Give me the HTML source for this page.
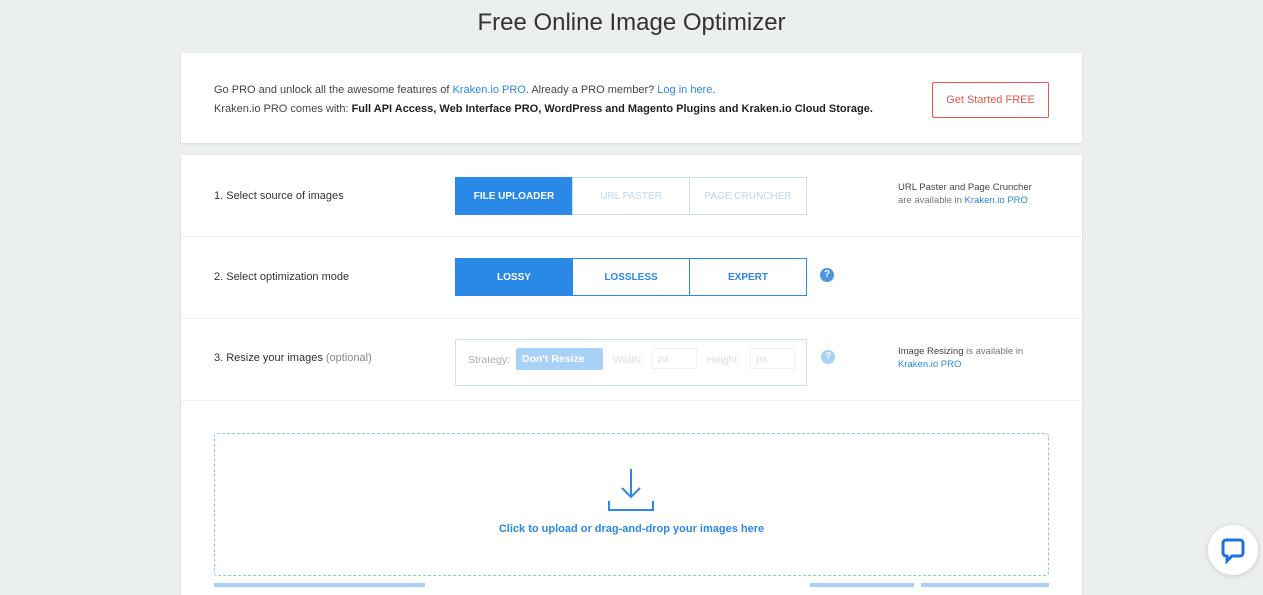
<!DOCTYPE html>
<html><head><meta charset="utf-8"><style>
*{box-sizing:border-box;margin:0;padding:0}
body{width:1263px;height:585px;overflow:hidden;background:#ecefef;font-family:"Liberation Sans",sans-serif;color:#333;position:relative}
h1{position:absolute;top:9px;left:0;width:1263px;text-align:center;font-weight:normal;font-size:24px;color:#333}
.card{position:absolute;left:181px;width:901px;background:#fff;box-shadow:0 1px 2px rgba(0,0,0,.12)}
.b{color:#2a88e6}
.row{position:absolute;left:0;width:901px;height:82px;border-bottom:1px solid #eee}
.lbl{position:absolute;left:33px;font-size:11px;color:#333}
.seg{position:absolute;left:275px;top:22px;display:flex}
.seg div{width:118px;height:38px;border:1px solid #2a88e6;margin-left:-1px;display:flex;align-items:center;justify-content:center;font-size:10px;color:#2a88e6;font-weight:bold}
.seg div.on{background:#2a88e6;color:#fff}
.seg.dis div{border-color:#c6e0f8;color:#b9d7f3;font-weight:normal}
.seg.dis div.on{border-color:#2a88e6;color:#fff;font-weight:bold}
.q{position:absolute;width:14px;height:14px;border-radius:50%;background:#4a96e0;color:#fff;font-size:10px;font-weight:bold;text-align:center;line-height:14px}
.note{position:absolute;left:717px;font-size:9.5px;color:#444;line-height:13px}
</style></head><body>
<h1>Free Online Image Optimizer</h1>
<div class="card" style="top:53px;height:90px">
<div style="position:absolute;left:33px;top:28px;font-size:11px;line-height:19px;color:#444">
Go PRO and unlock all the awesome features of <span class="b">Kraken.io PRO</span>. Already a PRO member? <span class="b">Log in here</span>.<br>
Kraken.io PRO comes with: <b style="color:#222">Full API Access, Web Interface PRO, WordPress and Magento Plugins and Kraken.io Cloud Storage.</b></div>
<div style="position:absolute;left:751px;top:29px;width:117px;height:36px;border:1px solid #e8554a;border-radius:2px;color:#e8554a;font-size:11px;display:flex;align-items:center;justify-content:center">Get Started FREE</div>
</div>
<div class="card" style="top:155px;height:440px">
<div class="row" style="top:0">
<div class="lbl" style="top:35px">1. Select source of images</div>
<div class="seg dis"><div class="on">FILE UPLOADER</div><div>URL PASTER</div><div>PAGE CRUNCHER</div></div>
<div class="note" style="top:26px">URL Paster and Page Cruncher<br><span style="color:#777">are available in</span> <span class="b">Kraken.io PRO</span></div>
</div>
<div class="row" style="top:82px">
<div class="lbl" style="top:34px">2. Select optimization mode</div>
<div class="seg" style="top:21px"><div class="on">LOSSY</div><div>LOSSLESS</div><div>EXPERT</div></div>
<div class="q" style="left:639px;top:31px">?</div>
</div>
<div class="row" style="top:164px">
<div class="lbl" style="top:33px">3. Resize your images <span style="color:#888">(optional)</span></div>
<div style="position:absolute;left:274px;top:20px;width:352px;height:47px;border:1px solid #c6e0f8;border-radius:2px;font-size:10.5px;color:#bbb">
<span style="position:absolute;left:12px;top:14px;color:#aaa">Strategy:</span>
<div style="position:absolute;left:60px;top:8px;width:87px;height:22px;background:#a9d1f7;border-radius:2px;color:#fff;font-weight:bold;padding:5px 6px">Don't Resize</div>
<span style="position:absolute;left:157px;top:14px;color:#ddd">Width:</span>
<div style="position:absolute;left:196px;top:8px;width:45px;height:21px;border:1px solid #f0f0f0;color:#ddd;padding:4px 5px">px</div>
<span style="position:absolute;left:251px;top:14px;color:#ddd">Height:</span>
<div style="position:absolute;left:294px;top:8px;width:45px;height:21px;border:1px solid #f0f0f0;color:#ddd;padding:4px 5px">px</div>
</div>
<div class="q" style="left:640px;top:31px;background:#a9d1f7">?</div>
<div class="note" style="top:26px">Image Resizing <span style="color:#777">is available in</span><br><span class="b">Kraken.io PRO</span></div>
</div>
<div style="position:absolute;left:33px;top:278px;width:835px;height:143px;border:1px dashed #8fc0ee;border-radius:3px">
<svg style="position:absolute;left:391px;top:33px" width="50" height="46" viewBox="0 0 50 46"><path d="M25 2V30M16 21L25 30L34 21M3 34V43H47V34" fill="none" stroke="#2a88e6" stroke-width="2"/></svg>
<div style="position:absolute;top:89px;width:100%;text-align:center;font-size:11px;font-weight:bold;color:#2a88e6">Click to upload or drag-and-drop your images here</div>
</div>
<div style="position:absolute;left:33px;top:428px;width:211px;height:4px;background:#a9d1f7"></div>
<div style="position:absolute;left:629px;top:428px;width:104px;height:4px;background:#a9d1f7"></div>
<div style="position:absolute;left:740px;top:428px;width:128px;height:4px;background:#a9d1f7"></div>
</div>
<div style="position:absolute;left:1208px;top:525px;width:50px;height:50px;border-radius:50%;background:#fff;box-shadow:0 1px 6px rgba(0,0,0,.15)">
<svg style="position:absolute;left:13px;top:13px" width="24" height="26" viewBox="0 0 24 26"><path d="M5 2H19A3 3 0 0 1 22 5V15A3 3 0 0 1 19 18H11L6 23V18H5A3 3 0 0 1 2 15V5A3 3 0 0 1 5 2Z" fill="none" stroke="#1f6fe0" stroke-width="3"/></svg>
</div>
</body></html>
